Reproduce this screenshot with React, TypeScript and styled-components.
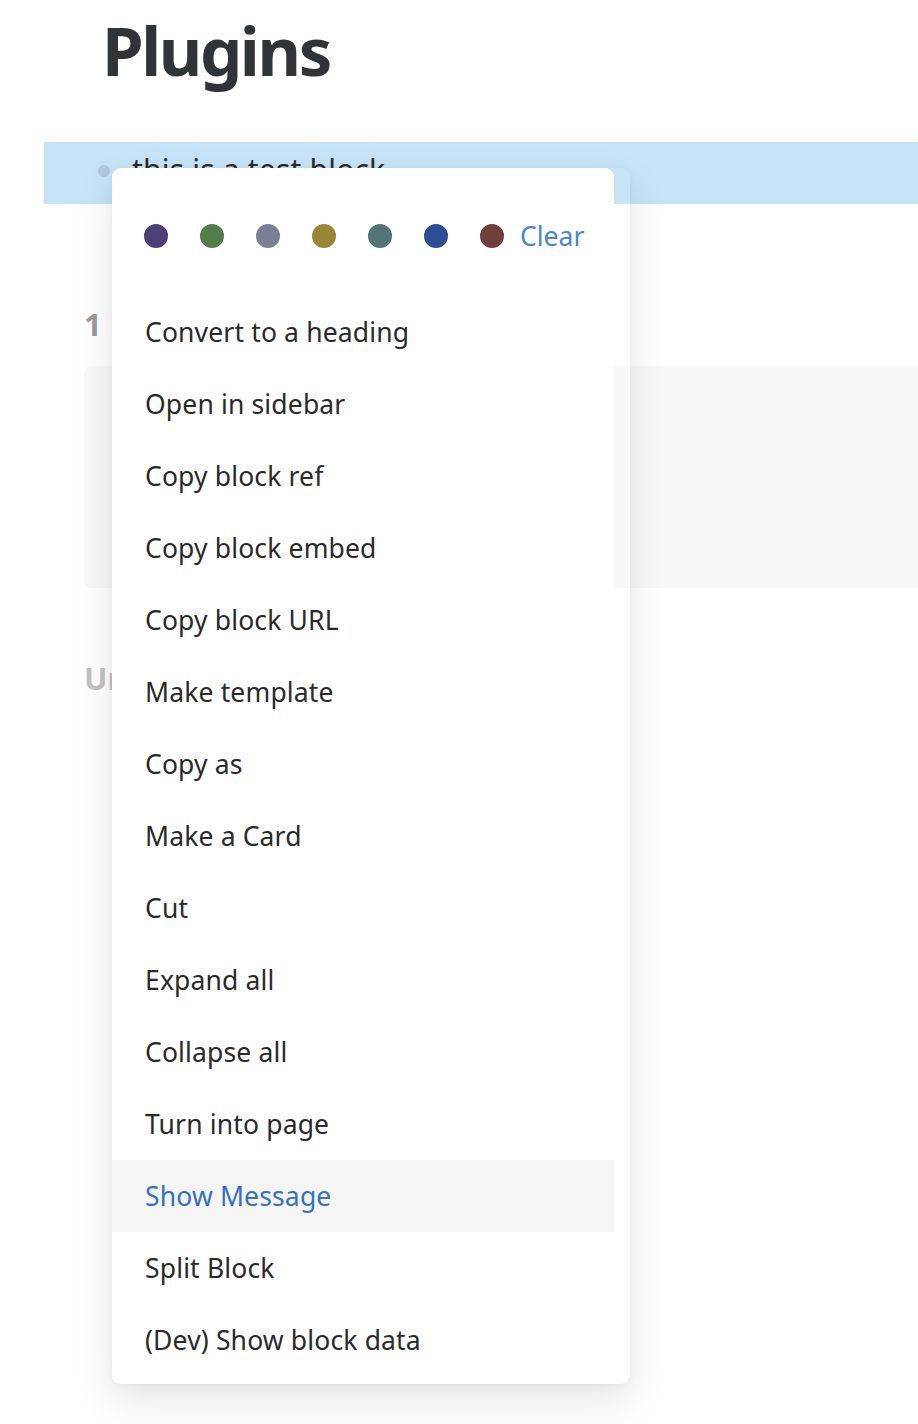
import React from "react";
import styled, { createGlobalStyle } from "styled-components";

const Global = createGlobalStyle`
  html, body { margin: 0; padding: 0; background: #ffffff; }
  body { font-family: "Noto Sans", "Open Sans", sans-serif; width: 918px; height: 1424px; overflow: hidden; }
  #root { position: relative; }
`;

const Page = styled.div`
  position: relative;
  width: 918px;
  height: 1424px;
  overflow: hidden;
`;

const Title = styled.h1`
  margin: 0;
  height: 142px;
  box-sizing: border-box;
  padding: 10px 0 0 102px;
  font-size: 67px;
  line-height: 80px;
  font-weight: 700;
  color: #303437;
  letter-spacing: -2.4px;
`;

const BlockRow = styled.div`
  margin-left: 44px;
  height: 62px;
  background: #c6e3f8;
  display: flex;
  align-items: flex-start;
  gap: 22px;
  padding-left: 54px;
  box-sizing: border-box;
`;

const Bullet = styled.span`
  width: 12px;
  height: 12px;
  border-radius: 50%;
  background: #b1c8dd;
  margin-top: 23px;
  flex: none;
`;

const BlockText = styled.span`
  font-size: 30px;
  line-height: 38px;
  margin-top: 9px;
  color: #2b2b2b;
  letter-spacing: 0.2px;
`;

const Refs = styled.section`
  margin-left: 84px;
  padding-top: 100px;
`;

const RefTitle = styled.h2<{ $muted?: boolean }>`
  margin: 0;
  font-size: 31px;
  line-height: 40px;
  font-weight: 700;
  color: ${(p) => (p.$muted ? "#c2c2c2" : "#9a9a9a")};
`;

const RefPanel = styled.div`
  margin-top: 22px;
  height: 222px;
  background: #f8f8f8;
  border-radius: 8px 0 0 8px;
`;

const UnlinkedTitle = styled(RefTitle)`
  margin-top: 70px;
`;

const MenuShell = styled.div`
  position: absolute;
  left: 112px;
  top: 168px;
  width: 518px;
  height: 1216px;
  border-radius: 9px;
  box-shadow: 0 16px 40px rgba(0, 0, 0, 0.1), 0 2px 10px rgba(0, 0, 0, 0.05);
`;

const MenuPanel = styled.div`
  width: 502px;
  height: 100%;
  background: #ffffff;
  border-radius: 9px;
  padding: 8px 0;
  box-sizing: border-box;
  display: flex;
  flex-direction: column;
`;

const Swatches = styled.div`
  height: 120px;
  display: flex;
  align-items: center;
  padding-left: 32px;
  gap: 32px;
`;

const Swatch = styled.span<{ $c: string }>`
  width: 24px;
  height: 24px;
  border-radius: 50%;
  background: ${(p) => p.$c};
  flex: none;
`;

const ClearLink = styled.span`
  font-size: 26.5px;
  color: #4a86d0;
  margin-left: -16px;
  line-height: 1;
`;

const Item = styled.div<{ $active?: boolean }>`
  height: 72px;
  display: flex;
  align-items: center;
  padding-left: 33px;
  font-size: 26.5px;
  letter-spacing: 0.15px;
  color: ${(p) => (p.$active ? "#3671c2" : "#2a2a2a")};
  background: ${(p) => (p.$active ? "#f5f5f5" : "transparent")};
  white-space: nowrap;
`;

const swatchColors = [
  "#4f3f77",
  "#557d4b",
  "#7a7f96",
  "#978635",
  "#527577",
  "#2d4e95",
  "#703f3c",
];

const items = [
  "Convert to a heading",
  "Open in sidebar",
  "Copy block ref",
  "Copy block embed",
  "Copy block URL",
  "Make template",
  "Copy as",
  "Make a Card",
  "Cut",
  "Expand all",
  "Collapse all",
  "Turn into page",
  "Show Message",
  "Split Block",
  "(Dev) Show block data",
];

export default function App() {
  return (
    <Page>
      <Global />
      <Title>Plugins</Title>
      <BlockRow>
        <Bullet />
        <BlockText>this is a test block</BlockText>
      </BlockRow>
      <Refs>
        <RefTitle>1 Linked Reference</RefTitle>
        <RefPanel />
        <UnlinkedTitle $muted>Unlinked References</UnlinkedTitle>
      </Refs>
      <MenuShell>
        <MenuPanel>
          <Swatches>
            {swatchColors.map((c) => (
              <Swatch key={c} $c={c} />
            ))}
            <ClearLink>Clear</ClearLink>
          </Swatches>
          {items.map((label) => (
            <Item key={label} $active={label === "Show Message"}>
              {label}
            </Item>
          ))}
        </MenuPanel>
      </MenuShell>
    </Page>
  );
}
